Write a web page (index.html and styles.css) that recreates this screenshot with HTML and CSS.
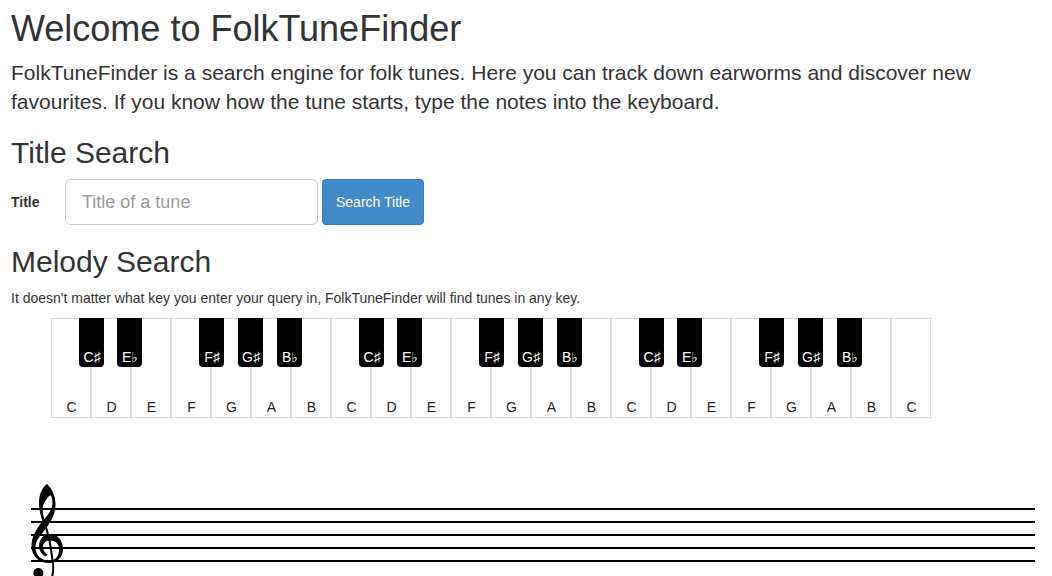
FILE: index.html
```html
<!DOCTYPE html>
<html lang="en">
<head>
    <meta charset="UTF-8">
    <meta name="viewport" content="width=device-width, initial-scale=1.0">
    <title>FolkTuneFinder</title>
    <link rel="stylesheet" href="styles.css">
</head>
<body>
    <main class="container">
        <h1>Welcome to FolkTuneFinder</h1>
        <p class="lead">FolkTuneFinder is a search engine for folk tunes. Here you can track down earworms and discover new favourites. If you know how the tune starts, type the notes into the keyboard.</p>

        <h2>Title Search</h2>
        <form class="title-search" action="#">
            <label for="title">Title</label>
            <input type="text" id="title" name="title" placeholder="Title of a tune">
            <button type="submit" class="btn-primary">Search Title</button>
        </form>

        <h2>Melody Search</h2>
        <p class="hint">It doesn't matter what key you enter your query in, FolkTuneFinder will find tunes in any key.</p>

        <div class="keyboard" id="keyboard"></div>

        <div class="stave">
            <svg class="clef" viewBox="0 0 40 110" aria-hidden="true">
                <path d="M15.7 4C10 9 8 16 8 23C8 29 9.500 35 12 43L14 42C12 35 11.300 30 12 26C13.500 21 17 16 21.500 14C20 9 18 6 15.700 4Z"/>
                <path d="M15.7 4C22 9 24.500 17 24.500 25C24.500 34 20 41 16 47C10 55 4.500 60 4.500 67C4.500 76 11 80.500 18 80.500C25 80.500 28 76 28 70C28 64 25 60.500 19 60.500C14 60.500 11.500 64 12 68C12.500 71 14 73 16.500 74.500L15 76.500C11 75 8 71 8 66C8 59 13 54 19 54C27 54 32 61 32 69C32 77 26 83 18 83C8 83 0.500 76 0.500 66C0.500 57 5 50 10 43C15 37 21 31 21.500 24C21.500 18 20 14 16.500 11Z"/>
                <path class="stem" d="M13 40L18.500 60L21.500 80C23 88 22 95 20 100C17 106 8 106 4 97"/>
                <circle cx="7.300" cy="93" r="5"/>
            </svg>
        </div>
    </main>
    <script src="keyboard.js"></script>
</body>
</html>
```
FILE: styles.css
```css
* {
    box-sizing: border-box;
}

body {
    margin: 0;
    padding: 0;
    background: #fff;
    color: #333;
    font-family: "Liberation Sans", Arial, sans-serif;
    font-size: 14px;
    line-height: 20px;
}

.container {
    padding: 9px 17px 0 11px;
}

h1, h2 {
    margin: 0;
    font-weight: normal;
}

h1 {
    font-size: 36px;
    line-height: 40px;
    margin-bottom: 9px;
}

h2 {
    font-size: 30px;
    line-height: 33px;
    margin-bottom: 10px;
}

.lead {
    margin: 0 0 20px;
    font-size: 21px;
    line-height: 29px;
}

.title-search {
    display: flex;
    align-items: center;
    gap: 4px;
    margin-bottom: 20px;
}

.title-search label {
    width: 50px;
    font-weight: bold;
}

.title-search input {
    width: 253px;
    height: 46px;
    padding: 10px 16px;
    border: 1px solid #ccc;
    border-radius: 6px;
    color: #555;
    font-family: inherit;
    font-size: 18px;
}

.title-search input::placeholder {
    color: #999;
}

.btn-primary {
    height: 46px;
    padding: 6px 13px;
    border: 1px solid #357ebd;
    border-radius: 4px;
    background: #428bca;
    color: #fff;
    font-family: inherit;
    font-size: 14px;
    cursor: pointer;
}

.hint {
    margin: 0 0 10px;
}

.keyboard {
    display: flex;
    margin-left: 40px;
}

.octave {
    position: relative;
    display: flex;
}

.key {
    display: flex;
    align-items: flex-end;
    justify-content: center;
    padding: 0 0 0 1px;
    font-family: "Liberation Sans", "DejaVu Sans", sans-serif;
    font-size: 14px;
    line-height: 20px;
    cursor: pointer;
}

.white {
    width: 40px;
    height: 100px;
    border: 1px solid #ddd;
    background: #fff;
    color: #222;
}

.black {
    position: absolute;
    top: 0;
    width: 25px;
    height: 49px;
    border: 0;
    border-radius: 0 0 4px 4px;
    background: #000;
    color: #fff;
}

.c-sharp {
    left: 28px;
}

.e-flat {
    left: 66px;
}

.f-sharp {
    left: 148px;
}

.g-sharp {
    left: 187px;
}

.b-flat {
    left: 226px;
}

/* five lines, 13px apart, with room above for the clef */
.stave {
    margin: 62px 0 0 20px;
    background: repeating-linear-gradient(#000 0 2px, transparent 2px 13px) 0 28px / 100% 54px no-repeat;
}

.clef {
    display: block;
    width: 40px;
    height: 110px;
}

.stem {
    fill: none;
    stroke: #000;
    stroke-width: 2;
}
```
FILE: keyboard.js
```javascript
const whiteNotes = ['C', 'D', 'E', 'F', 'G', 'A', 'B'];
const blackNotes = [
    ['C♯', 'c-sharp'],
    ['E♭', 'e-flat'],
    ['F♯', 'f-sharp'],
    ['G♯', 'g-sharp'],
    ['B♭', 'b-flat']
];

const keyboard = document.getElementById('keyboard');

function addKey(parent, note, className) {
    const key = document.createElement('button');
    key.type = 'button';
    key.className = 'key ' + className;
    key.textContent = note;
    parent.appendChild(key);
}

for (let i = 0; i < 3; i++) {
    const octave = document.createElement('div');
    octave.className = 'octave';
    whiteNotes.forEach(note => addKey(octave, note, 'white'));
    blackNotes.forEach(([note, name]) => addKey(octave, note, 'black ' + name));
    keyboard.appendChild(octave);
}

// top C
addKey(keyboard, 'C', 'white');
```
